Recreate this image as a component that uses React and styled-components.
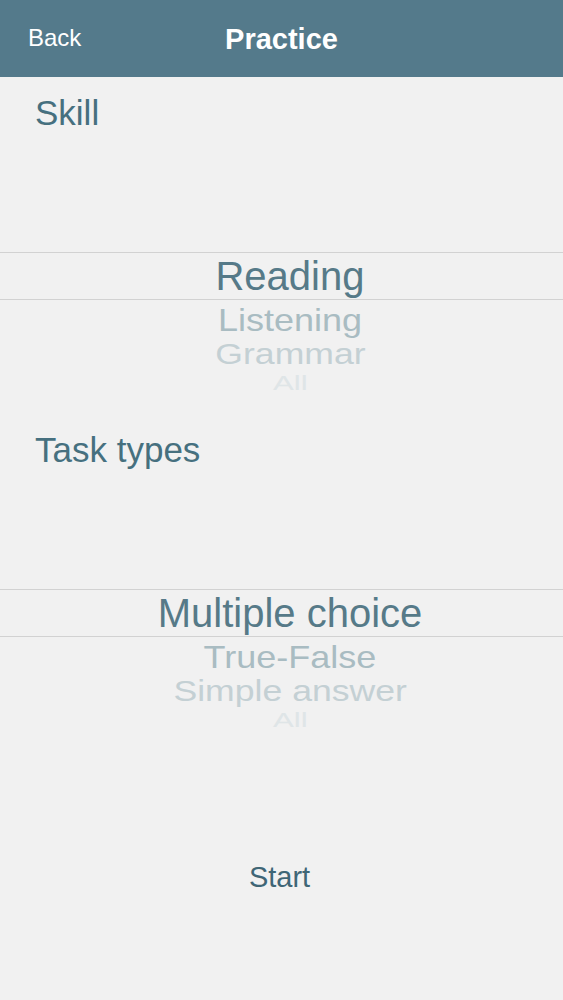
import React, { useState } from "react";
import styled, { createGlobalStyle } from "styled-components";

const skills = ["Reading", "Listening", "Grammar", "All"];
const taskTypes = ["Multiple choice", "True-False", "Simple answer", "All"];

// how the wheel bends away below the selected row
const wheel = [
  { height: 46, sx: 1, sy: 1, color: "#567a88" },
  { height: 41, sx: 0.9, sy: 0.8, color: "#a9bcc2" },
  { height: 27, sx: 0.89, sy: 0.72, color: "#c4d0d4" },
  { height: 31, sx: 0.78, sy: 0.5, color: "#dfe5e7" },
];

function Picker({ items, selected }) {
  return (
    <PickerWrapper>
      <PickerViewport>
        {items.map((item, i) => {
          const w = wheel[i - selected] || wheel[wheel.length - 1];
          return (
            <PickerRow
              key={item}
              $height={w.height}
              $sx={w.sx}
              $sy={w.sy}
              $color={w.color}
              $selected={i === selected}
            >
              <span>{item}</span>
            </PickerRow>
          );
        })}
      </PickerViewport>
    </PickerWrapper>
  );
}

export default function App() {
  const [skill] = useState(0);
  const [taskType] = useState(0);

  return (
    <>
      <GlobalStyle />
      <Page>
        <Header>
          <BackButton>Back</BackButton>
          <Title>Practice</Title>
          <span />
        </Header>

        <SectionLabel>Skill</SectionLabel>
        <Picker items={skills} selected={skill} />

        <SectionLabel>Task types</SectionLabel>
        <Picker items={taskTypes} selected={taskType} />

        <StartButton>Start</StartButton>
      </Page>
    </>
  );
}

const GlobalStyle = createGlobalStyle`
  body {
    margin: 0;
    background-color: #f1f1f1;
    font-family: "Liberation Sans", Arial, sans-serif;
  }
`;

const Page = styled.div`
  display: flex;
  flex-direction: column;
  width: 563px;
  min-height: 1000px;
  background-color: #f1f1f1;
`;

const Header = styled.header`
  display: grid;
  grid-template-columns: 1fr auto 1fr;
  align-items: center;
  height: 77px;
  padding: 0 28px;
  box-sizing: border-box;
  background-color: #547a8b;
  color: #ffffff;
`;

const BackButton = styled.button`
  justify-self: start;
  padding: 0;
  margin-top: -2px;
  border: none;
  background: none;
  font-family: inherit;
  font-size: 24px;
  color: #ffffff;
  cursor: pointer;
`;

const Title = styled.h1`
  margin: 2px 0 0;
  font-size: 29px;
  font-weight: bold;
`;

const SectionLabel = styled.h2`
  margin: 0;
  padding-left: 35px;
  height: 72px;
  line-height: 72px;
  font-size: 35px;
  font-weight: normal;
  color: #46707f;
`;

const PickerWrapper = styled.div`
  height: 265px;
`;

const PickerViewport = styled.div`
  display: flex;
  flex-direction: column;
  height: 252px;
  padding-top: 104px;
  box-sizing: border-box;
  overflow: hidden;
`;

const PickerRow = styled.div`
  flex: none;
  display: flex;
  justify-content: center;
  padding-left: 17px;
  height: ${(p) => p.$height}px;
  line-height: ${(p) => p.$height}px;
  font-size: 40px;
  color: ${(p) => p.$color};
  border-top: ${(p) => (p.$selected ? "1px solid #d2d2d2" : "none")};
  border-bottom: ${(p) => (p.$selected ? "1px solid #d2d2d2" : "none")};
  margin-top: ${(p) => (p.$selected ? "-1px" : "0")};
  white-space: nowrap;

  span {
    display: block;
    transform: scale(${(p) => p.$sx}, ${(p) => p.$sy});
  }
`;

const StartButton = styled.button`
  align-self: center;
  margin: 101px 0 0 -4px;
  height: 50px;
  padding: 0;
  border: none;
  background: none;
  font-family: inherit;
  font-size: 29px;
  color: #3f6676;
  cursor: pointer;
`;
